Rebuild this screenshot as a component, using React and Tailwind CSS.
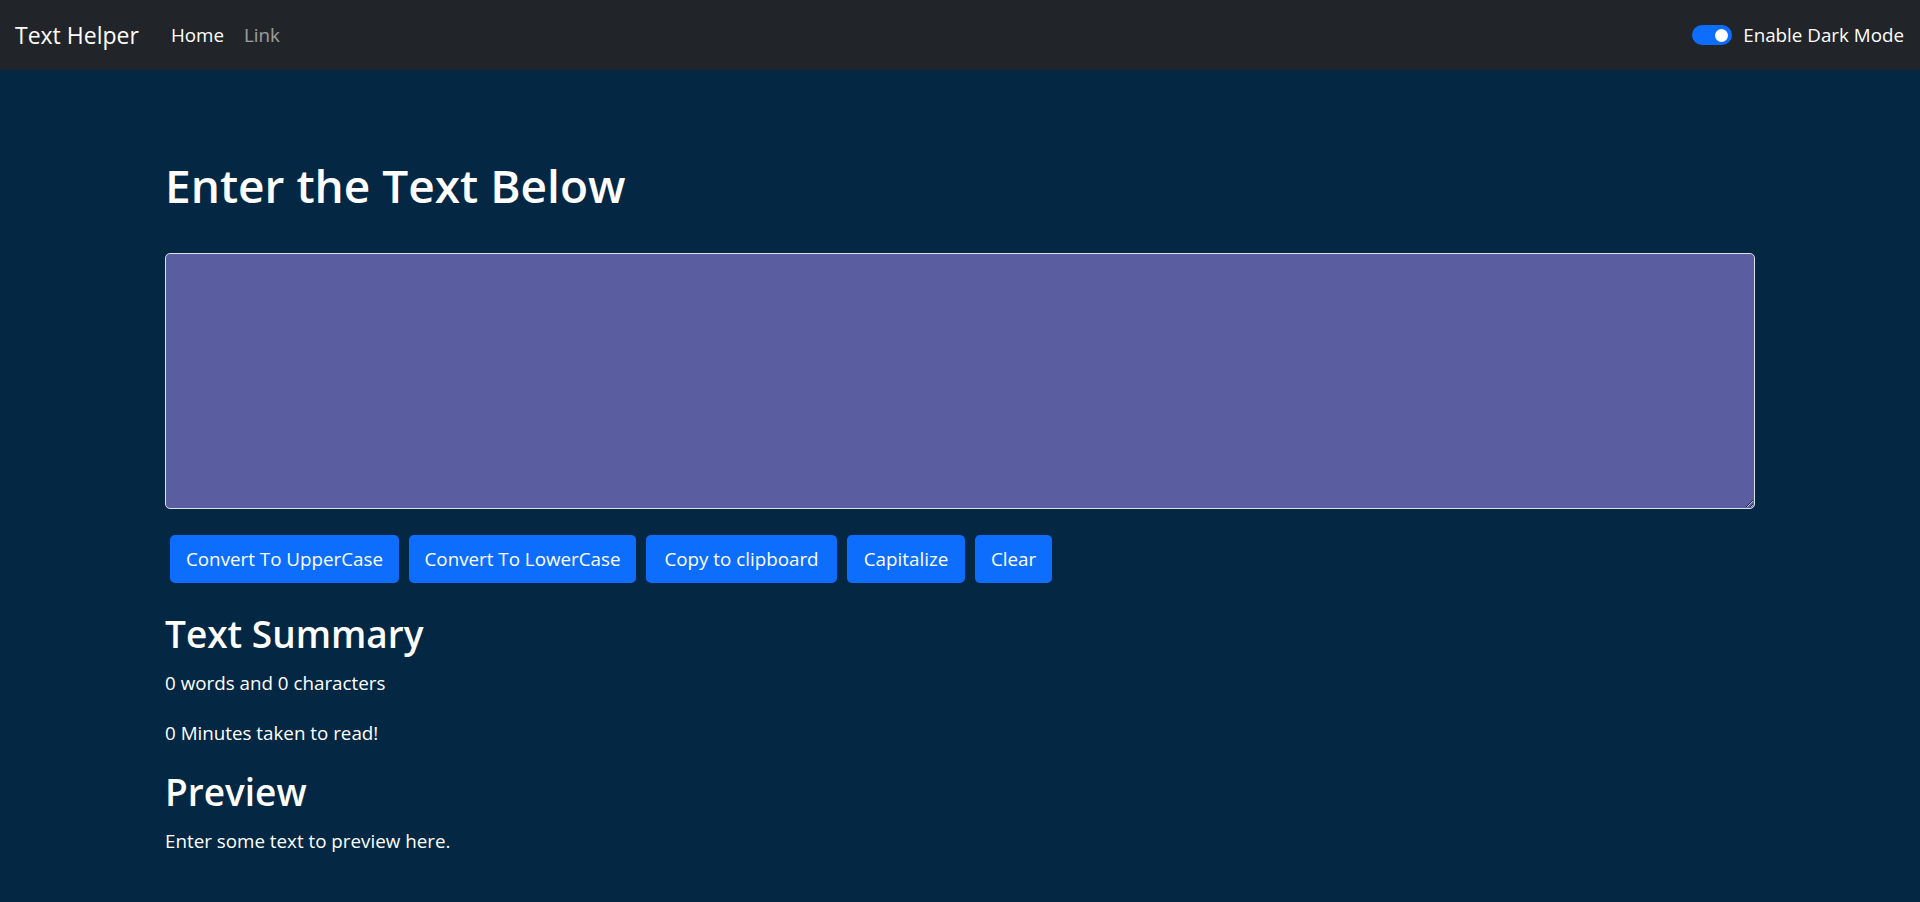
import React, { useState } from 'react';

const buttons = [
    { label: 'Convert To UpperCase', w: 'w-[229px]' },
    { label: 'Convert To LowerCase', w: 'w-[227px]' },
    { label: 'Copy to clipboard', w: 'w-[191px]' },
    { label: 'Capitalize', w: 'w-[118px]' },
    { label: 'Clear', w: 'w-[77px]' },
];

export default function App() {
    const [text, setText] = useState('');
    const [dark, setDark] = useState(true);

    const words = text.split(/\s+/).filter(w => w.length > 0).length;

    return (
        <div className="min-h-screen flex flex-col font-['Open_Sans','Noto_Sans',sans-serif] text-white">
            {/* navbar */}
            <nav className="h-[70px] bg-[#212529] flex items-center px-[15px]">
                <a href="#" className="text-[23px] leading-[37px] mr-[22px] text-white">Text Helper</a>
                <ul className="flex items-center text-[18.8px]">
                    <li><a href="#" className="px-[10px] text-white">Home</a></li>
                    <li><a href="#" className="px-[10px] text-white/55">Link</a></li>
                </ul>
                <label className="ml-auto flex items-center gap-[11px] text-[18.8px] cursor-pointer pr-[1px]">
                    <button
                        onClick={() => setDark(!dark)}
                        className={`w-[40px] h-[20px] rounded-full flex items-center px-[4px] ${dark ? 'bg-[#0d6efd] justify-end' : 'bg-white border border-gray-300 justify-start'}`}
                    >
                        <span className={`w-[13px] h-[13px] rounded-full ${dark ? 'bg-white' : 'bg-gray-300'}`} />
                    </button>
                    Enable Dark Mode
                </label>
            </nav>

            <main className="flex-1 bg-[#042743]">
                <div className="w-[1620px] mx-auto px-[15px] pt-[85px]">
                    <h1 className="text-[46px] leading-[60px] font-semibold mb-[38px]">Enter the Text Below</h1>
                    <textarea
                        value={text}
                        onChange={e => setText(e.target.value)}
                        rows={8}
                        className="block w-full h-[256px] bg-[#5a5da0] border border-[#dee2e6] rounded-[5px] px-[15px] py-[7px] text-[18.8px] text-white outline-none resize-y"
                    />
                    <div className="flex mt-[26px]">
                        {buttons.map(b => (
                            <button
                                key={b.label}
                                className={`${b.w} h-[48px] mx-[5px] bg-[#0d6efd] rounded-[5px] text-[18.8px] leading-[30px] text-white text-center whitespace-nowrap`}
                            >
                                {b.label}
                            </button>
                        ))}
                    </div>

                    <div className="mt-[27px] pb-[20px]">
                        <h2 className="text-[37px] leading-[48px] font-semibold mb-[10px]">Text Summary</h2>
                        <p className="text-[18.8px] leading-[30px] mb-[20px]">{words} words and {text.length} characters</p>
                        <p className="text-[18.8px] leading-[30px] mb-[20px]">{0.008 * words} Minutes taken to read!</p>
                        <h2 className="text-[37px] leading-[48px] font-semibold mb-[10px]">Preview</h2>
                        <p className="text-[18.8px] leading-[30px]">{text.length > 0 ? text : 'Enter some text to preview here.'}</p>
                    </div>
                </div>
            </main>
        </div>
    );
}
